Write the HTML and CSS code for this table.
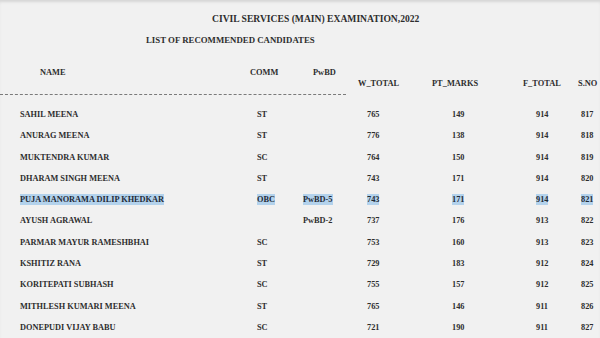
FILE: index.html
```html
<!DOCTYPE html>
<html>
<head>
<meta charset="utf-8">
<link rel="stylesheet" href="styles.css">
</head>
<body>
<div class="page">
  <div class="title">CIVIL SERVICES (MAIN) EXAMINATION,2022</div>
  <div class="subtitle">LIST OF RECOMMENDED CANDIDATES</div>
  <div class="head">
    <div class="h-name">NAME</div>
    <div class="h-comm">COMM</div>
    <div class="h-pwbd">PwBD</div>
    <div class="h-w low">W_TOTAL</div>
    <div class="h-pt low">PT_MARKS</div>
    <div class="h-f low">F_TOTAL</div>
    <div class="h-s low">S.NO</div>
  </div>
  <div class="rule"></div>
  <div class="rows">
    <div class="row"><span>SAHIL MEENA</span><span>ST</span><span></span><span>765</span><span>149</span><span>914</span><span>817</span></div>
    <div class="row"><span>ANURAG MEENA</span><span>ST</span><span></span><span>776</span><span>138</span><span>914</span><span>818</span></div>
    <div class="row"><span>MUKTENDRA KUMAR</span><span>SC</span><span></span><span>764</span><span>150</span><span>914</span><span>819</span></div>
    <div class="row"><span>DHARAM SINGH MEENA</span><span>ST</span><span></span><span>743</span><span>171</span><span>914</span><span>820</span></div>
    <div class="row sel"><span><mark>PUJA MANORAMA DILIP KHEDKAR</mark></span><span><mark>OBC</mark></span><span><mark>PwBD-5</mark></span><span><mark>743</mark></span><span><mark>171</mark></span><span><mark>914</mark></span><span><mark>821</mark></span></div>
    <div class="row"><span>AYUSH AGRAWAL</span><span></span><span>PwBD-2</span><span>737</span><span>176</span><span>913</span><span>822</span></div>
    <div class="row"><span>PARMAR MAYUR RAMESHBHAI</span><span>SC</span><span></span><span>753</span><span>160</span><span>913</span><span>823</span></div>
    <div class="row"><span>KSHITIZ RANA</span><span>ST</span><span></span><span>729</span><span>183</span><span>912</span><span>824</span></div>
    <div class="row"><span>KORITEPATI SUBHASH</span><span>SC</span><span></span><span>755</span><span>157</span><span>912</span><span>825</span></div>
    <div class="row"><span>MITHLESH KUMARI MEENA</span><span>ST</span><span></span><span>765</span><span>146</span><span>911</span><span>826</span></div>
    <div class="row"><span>DONEPUDI VIJAY BABU</span><span>SC</span><span></span><span>721</span><span>190</span><span>911</span><span>827</span></div>
  </div>
</div>
</body>
</html>
```

FILE: styles.css
```css
html, body {
  margin: 0;
  padding: 0;
}
body {
  width: 600px;
  height: 338px;
  overflow: hidden;
  background: #f1f1f1;
  font-family: "Liberation Serif", "Times New Roman", serif;
  font-weight: bold;
  color: #2d2d2d;
}
.page {
  position: relative;
  height: 338px;
  box-shadow: inset 0 3px 3px -1px #d6d6d6;
}
.title {
  font-size: 9.6px;
  padding-top: 13px;
  height: 12px;
  padding-left: 212px;
  white-space: nowrap;
}
.subtitle {
  font-size: 8.8px;
  padding-top: 10px;
  height: 12px;
  padding-left: 146px;
  white-space: nowrap;
}
.head {
  display: grid;
  grid-template-columns: 250px 63px 45px 74px 91px 55px 1fr;
  font-size: 8.4px;
  height: 21px;
  margin-top: 21px;
  white-space: nowrap;
}
.h-name { padding-left: 40px; }
.low { padding-top: 11px; }
.rule {
  height: 0;
  width: 346px;
  margin-top: 5px;
  border-top: 1px dashed #7a7a7a;
}
.rows {
  padding-top: 14px;
}
.row {
  display: grid;
  grid-template-columns: 237px 46px 64px 85px 84px 45px 1fr;
  padding-left: 20px;
  height: 21.3px;
  font-size: 8.3px;
  line-height: 11px;
  white-space: nowrap;
}
mark {
  background: #b3d2ec;
  color: #1f2a36;
  padding: 1px 0;
}
```
